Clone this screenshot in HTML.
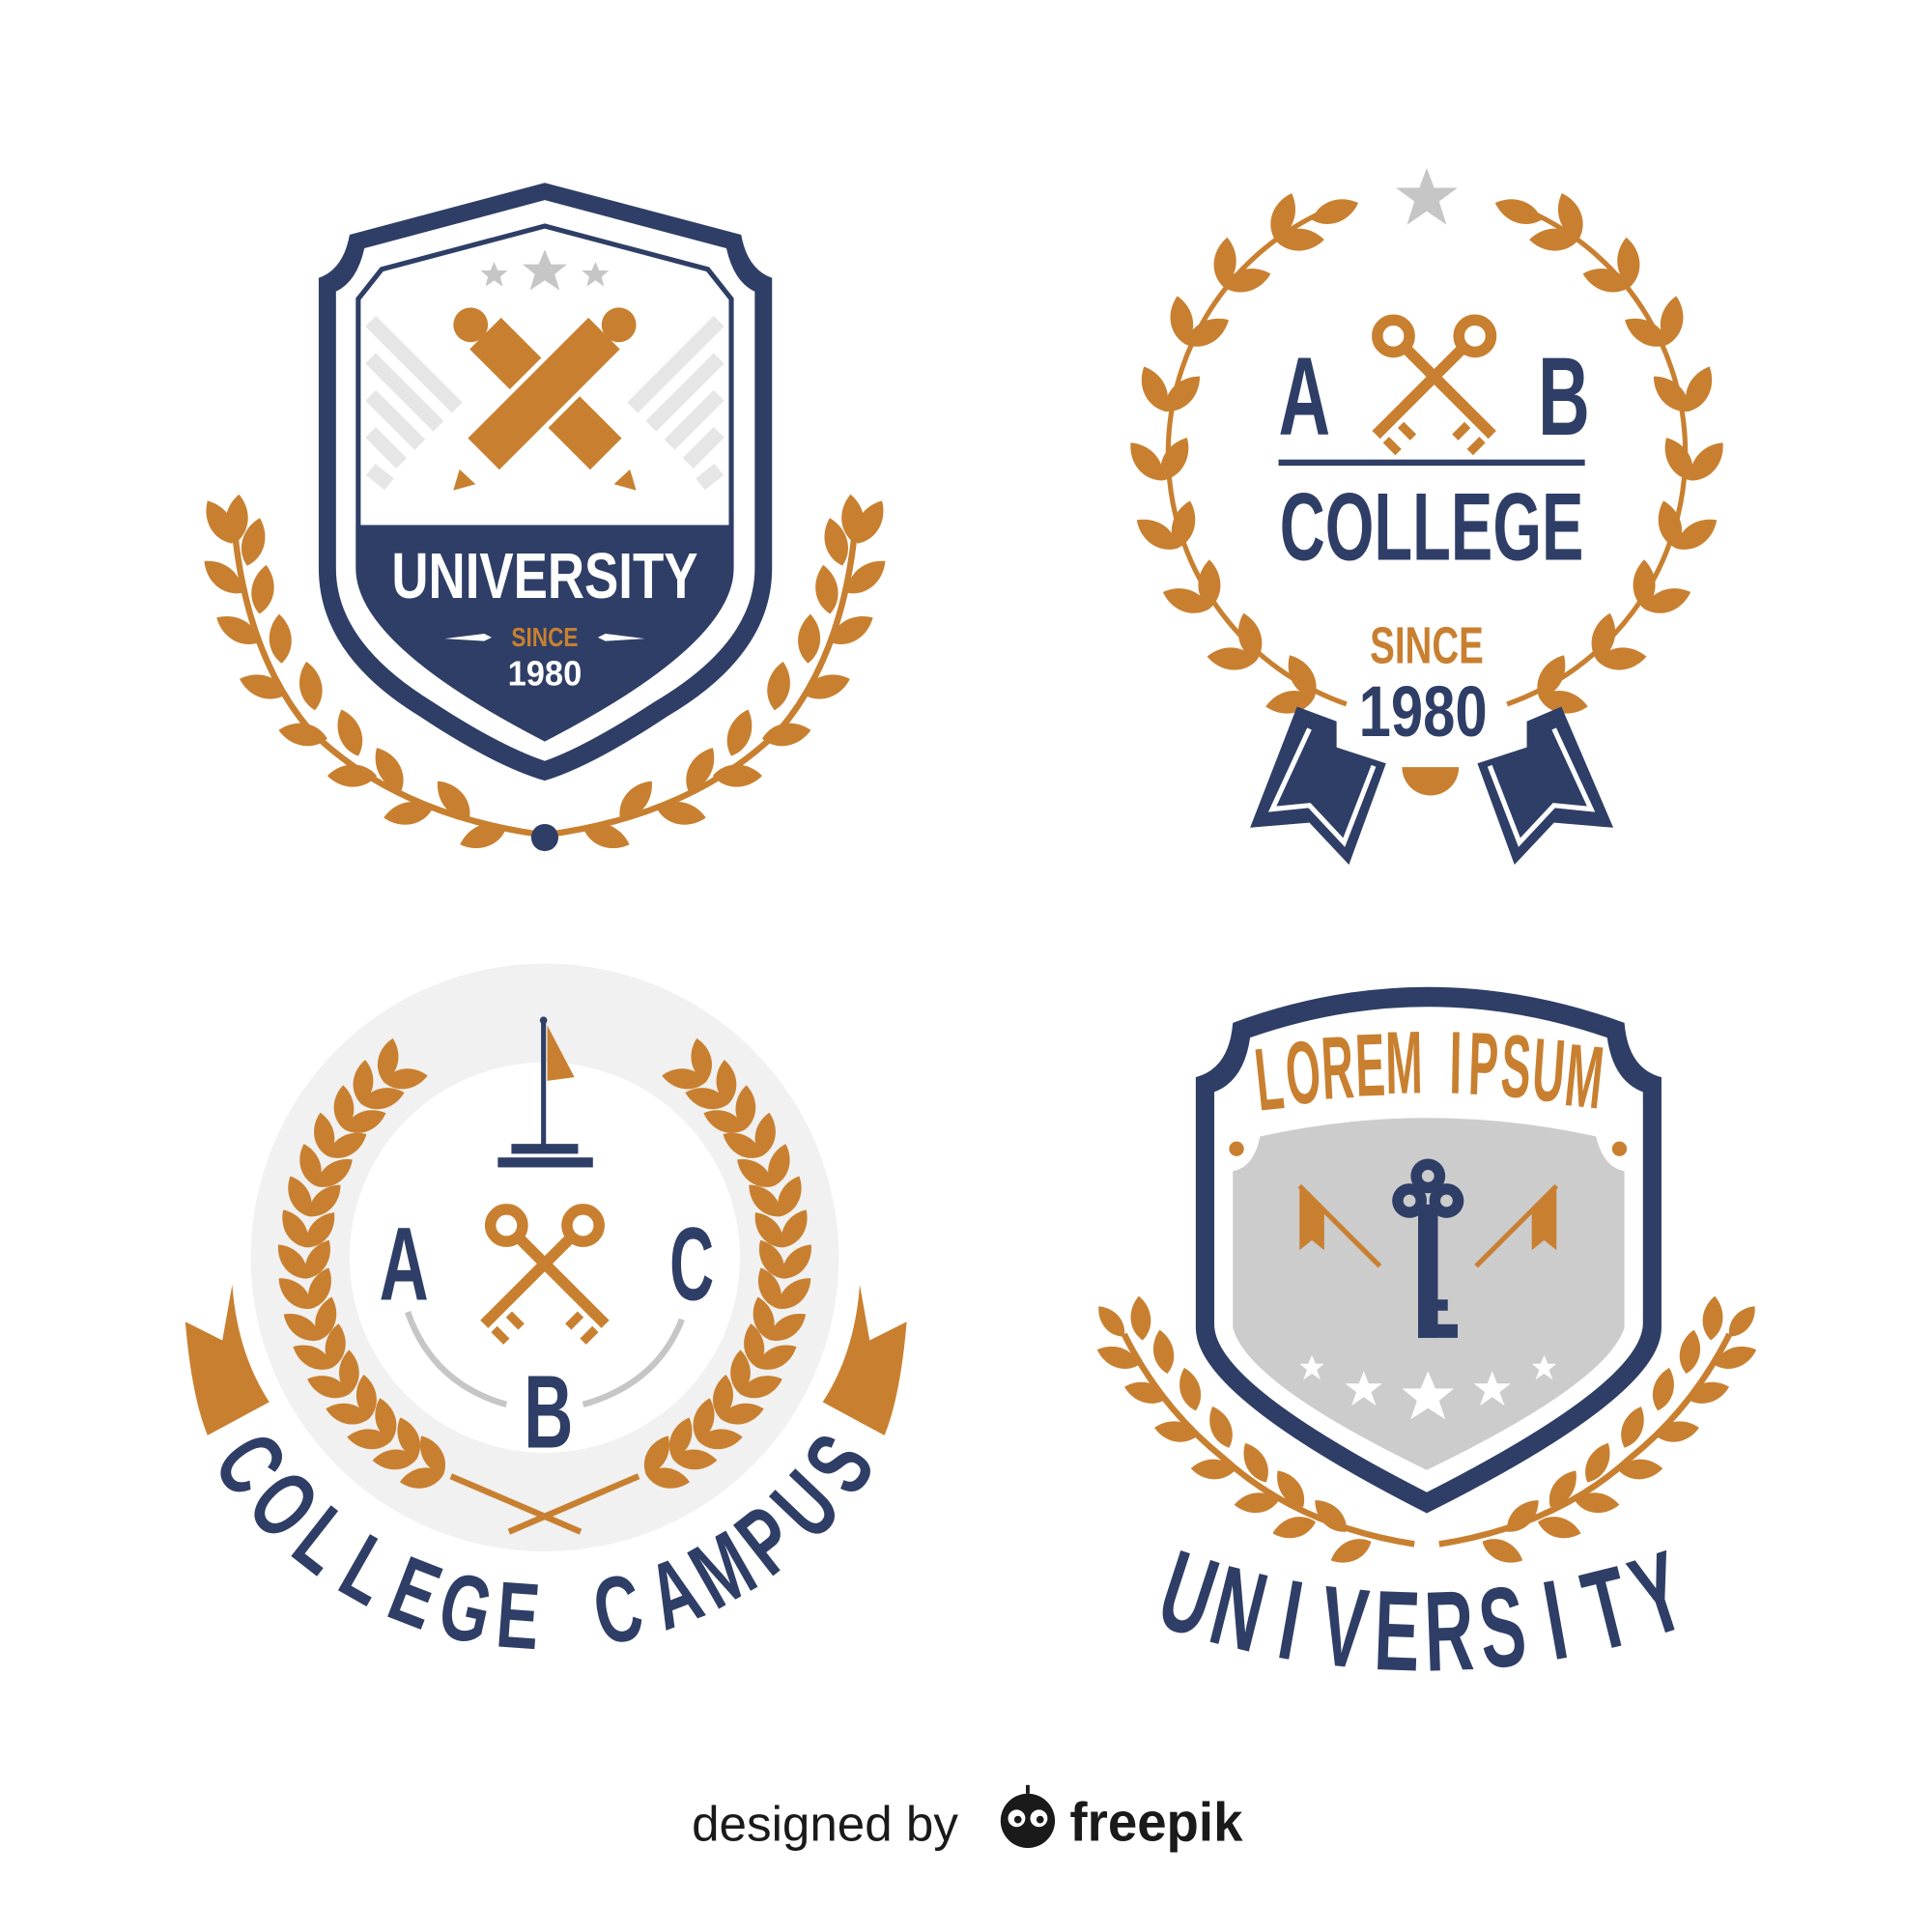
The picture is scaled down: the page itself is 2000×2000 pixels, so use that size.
<!DOCTYPE html>
<html><head><meta charset="utf-8"><style>
html,body{margin:0;padding:0;background:#fff}
svg{display:block}
.c{font-family:"Liberation Sans",sans-serif;font-weight:bold}
.L{font-family:"Liberation Sans",sans-serif;font-weight:bold;text-anchor:middle}
</style></head><body>
<svg width="2000" height="2000" viewBox="0 0 1564 1564" xmlns="http://www.w3.org/2000/svg">
<defs>
<path id="lf" d="M0,0 C12,-10 12,-28 0,-40 C-12,-28 -12,-10 0,0Z" fill="#c88030"/>
<clipPath id="bot1"><rect x="250" y="425" width="400" height="300"/></clipPath>
<clipPath id="in1"><path d="M441,183 L573,218 L592,242 L592,460 Q592,520 441,598 Q290,520 290,460 L290,242 L309,218 Z"/></clipPath>
<g id="key">
<circle cx="0" cy="0" r="13" fill="none" stroke="#c88030" stroke-width="9"/>
<line x1="9" y1="9" x2="80" y2="80" stroke="#c88030" stroke-width="9"/>
<line x1="60" y1="72" x2="50" y2="82" stroke="#c88030" stroke-width="7"/>
<line x1="72" y1="84" x2="62" y2="94" stroke="#c88030" stroke-width="7"/>
</g>
</defs>

<!-- ============ BADGE 1 ============ -->
<g id="br1">
<path d="M441,676 Q320,660 250,590 Q200,530 190,430" fill="none" stroke="#c88030" stroke-width="5"/>
<use href="#lf" transform="translate(410,670) rotate(-110)"/>
<use href="#lf" transform="translate(380,663) rotate(-40)"/>
<use href="#lf" transform="translate(350,655) rotate(-100)"/>
<use href="#lf" transform="translate(325,640) rotate(-30)"/>
<use href="#lf" transform="translate(305,628) rotate(-90)"/>
<use href="#lf" transform="translate(290,612) rotate(-20)"/>
<use href="#lf" transform="translate(265,598) rotate(-80)"/>
<use href="#lf" transform="translate(255,575) rotate(-10)"/>
<use href="#lf" transform="translate(232,562) rotate(-72)"/>
<use href="#lf" transform="translate(228,537) rotate(-3)"/>
<use href="#lf" transform="translate(210,520) rotate(-60)"/>
<use href="#lf" transform="translate(210,497) rotate(8)"/>
<use href="#lf" transform="translate(196,480) rotate(-50)"/>
<use href="#lf" transform="translate(200,458) rotate(15)"/>
<use href="#lf" transform="translate(188,440) rotate(-30)"/>
<use href="#lf" transform="translate(190,440) rotate(5)"/>
</g>
<use href="#br1" transform="translate(882,0) scale(-1,1)"/>
<circle cx="441" cy="678" r="11" fill="#2f3e66"/>

<path d="M441,148 L600,190 Q605,218 625,225 L625,460 Q625,530 540,580 Q480,620 441,632 Q400,620 340,580 Q258,530 258,460 L258,225 Q278,218 283,190 Z" fill="#2f3e66"/>
<path d="M441,162 L588,201 Q594,228 611,236 L611,460 Q611,520 530,568 Q475,604 441,616 Q405,604 350,568 Q272,520 272,460 L272,236 Q289,228 295,201 Z" fill="#fff"/>
<path d="M441,183 L573,218 L592,242 L592,460 Q592,520 441,598 Q290,520 290,460 L290,242 L309,218 Z" fill="none" stroke="#2f3e66" stroke-width="4"/>
<g clip-path="url(#in1)">
<g stroke="#e6e6e6" stroke-width="12">
<line x1="300" y1="260" x2="370" y2="330"/><line x1="300" y1="290" x2="355" y2="345"/><line x1="300" y1="320" x2="340" y2="360"/><line x1="300" y1="350" x2="325" y2="375"/><line x1="300" y1="380" x2="315" y2="392"/>
<line x1="582" y1="260" x2="512" y2="330"/><line x1="582" y1="290" x2="527" y2="345"/><line x1="582" y1="320" x2="542" y2="360"/><line x1="582" y1="350" x2="557" y2="375"/><line x1="582" y1="380" x2="567" y2="392"/>
</g>
<path d="M441,183 L573,218 L592,242 L592,460 Q592,520 441,598 Q290,520 290,460 L290,242 L309,218 Z" fill="#2f3e66" clip-path="url(#bot1)"/>
</g>
<rect x="423" y="250" width="36" height="138" fill="#c88030" transform="rotate(-45 441 318)"/>
<rect x="423" y="250" width="36" height="138" fill="#c88030" stroke="#fff" stroke-width="8" paint-order="stroke" transform="rotate(45 441 318)"/>
<circle cx="381" cy="263" r="14" fill="#c88030"/><circle cx="501" cy="263" r="14" fill="#c88030"/>
<polygon points="367,397 372,380 385,392" fill="#c88030"/><polygon points="515,397 510,380 497,392" fill="#c88030"/>
<g fill="#c6c6c6">
<polygon points="441,202 446,214 459,214 449,222 453,235 441,227 429,235 433,222 423,214 436,214"/>
<polygon points="400,212 403,219 411,219 405,224 407,232 400,227 393,232 395,224 389,219 397,219"/>
<polygon points="482,212 485,219 493,219 487,224 489,232 482,227 475,232 477,224 471,219 479,219"/>
</g>
<text x="441" y="484" class="c" font-size="52" fill="#fff" text-anchor="middle" textLength="248" lengthAdjust="spacingAndGlyphs">UNIVERSITY</text>
<text x="441" y="523" class="c" font-size="22" fill="#c88030" text-anchor="middle" textLength="54" lengthAdjust="spacingAndGlyphs">SINCE</text>
<text x="441" y="555" class="c" font-size="28" fill="#fff" text-anchor="middle" textLength="60" lengthAdjust="spacingAndGlyphs">1980</text>
<polygon points="360,517 392,513 398,516 392,519" fill="#fff"/><polygon points="522,517 490,513 484,516 490,519" fill="#fff"/>

<!-- ============ BADGE 2 ============ -->
<g id="br2">
<path d="M1090,570 A215,215 0 0 1 1070,172" fill="none" stroke="#c88030" stroke-width="4"/>
<use href="#lf" transform="translate(1064,565) rotate(-100)"/><use href="#lf" transform="translate(1064,565) rotate(-30)"/>
<use href="#lf" transform="translate(1017,535) rotate(-85)"/><use href="#lf" transform="translate(1017,535) rotate(-15)"/>
<use href="#lf" transform="translate(979,493) rotate(-70)"/><use href="#lf" transform="translate(979,493) rotate(0)"/>
<use href="#lf" transform="translate(953,444) rotate(-55)"/><use href="#lf" transform="translate(953,444) rotate(15)"/>
<use href="#lf" transform="translate(941,389) rotate(-40)"/><use href="#lf" transform="translate(941,389) rotate(30)"/>
<use href="#lf" transform="translate(943,333) rotate(-25)"/><use href="#lf" transform="translate(943,333) rotate(45)"/>
<use href="#lf" transform="translate(960,279) rotate(-10)"/><use href="#lf" transform="translate(960,279) rotate(60)"/>
<use href="#lf" transform="translate(990,232) rotate(5)"/><use href="#lf" transform="translate(990,232) rotate(75)"/>
<use href="#lf" transform="translate(1032,194) rotate(20)"/><use href="#lf" transform="translate(1032,194) rotate(90)"/>
<use href="#lf" transform="translate(1062,178) rotate(70)"/>
</g>
<use href="#br2" transform="translate(2310,0) scale(-1,1)"/>
<polygon points="1155,136 1161,152 1180,152 1165,163 1171,182 1155,171 1139,182 1145,163 1130,152 1149,152" fill="#c6c6c6"/>
<rect x="1100" y="520" width="110" height="95" fill="#fff"/>
<text x="1056" y="352" class="c" font-size="90" fill="#2f3e66" text-anchor="middle" textLength="42" lengthAdjust="spacingAndGlyphs">A</text>
<text x="1266" y="352" class="c" font-size="90" fill="#2f3e66" text-anchor="middle" textLength="42" lengthAdjust="spacingAndGlyphs">B</text>
<use href="#key" transform="translate(1128,272)"/>
<use href="#key" transform="translate(1194,272) scale(-1,1)"/>
<rect x="1035" y="372" width="248" height="5" fill="#2f3e66"/>
<text x="1159" y="453" class="c" font-size="78" fill="#2f3e66" text-anchor="middle" textLength="246" lengthAdjust="spacingAndGlyphs">COLLEGE</text>
<text x="1155" y="537" class="c" font-size="42" fill="#c88030" text-anchor="middle" textLength="92" lengthAdjust="spacingAndGlyphs">SINCE</text>
<text x="1152" y="596" class="c" font-size="58" fill="#2f3e66" text-anchor="middle" textLength="104" lengthAdjust="spacingAndGlyphs">1980</text>
<path d="M1135,621 L1181,621 A23,23 0 0 1 1135,621Z" fill="#c88030"/>
<polygon points="1050,572 1082,584 1082,605 1122,618 1092,700 1060,666 1012,670" fill="#2f3e66"/>
<polyline points="1060,590 1030,655 1060,652 1088,682 1112,620" fill="none" stroke="#fff" stroke-width="4"/>
<polygon points="1264,572 1236,584 1236,605 1196,618 1226,700 1258,666 1306,670" fill="#2f3e66"/>
<polyline points="1258,590 1288,655 1258,652 1230,682 1206,620" fill="none" stroke="#fff" stroke-width="4"/>

<!-- ============ BADGE 3 ============ -->
<circle cx="441" cy="1018" r="238" fill="#f1f1f1"/>
<circle cx="441" cy="1018" r="158" fill="#fff"/>
<path d="M150,1070 Q155,1130 168,1162 L218,1135 Q192,1095 188,1040 L180,1085 Z" fill="#c88030"/>
<path d="M734,1070 Q729,1130 716,1162 L666,1135 Q692,1095 696,1040 L704,1085 Z" fill="#c88030"/>
<g id="br3">
<g transform="translate(441,1018) scale(0.9) translate(-441,-1018)">
<g transform="translate(-714,648)">
<use href="#lf" transform="translate(1064,565) rotate(-100)"/><use href="#lf" transform="translate(1064,565) rotate(-30)"/>
<use href="#lf" transform="translate(1040,551) rotate(-92)"/><use href="#lf" transform="translate(1040,551) rotate(-22)"/>
<use href="#lf" transform="translate(1017,535) rotate(-85)"/><use href="#lf" transform="translate(1017,535) rotate(-15)"/>
<use href="#lf" transform="translate(997,515) rotate(-77)"/><use href="#lf" transform="translate(997,515) rotate(-7)"/>
<use href="#lf" transform="translate(979,493) rotate(-70)"/><use href="#lf" transform="translate(979,493) rotate(0)"/>
<use href="#lf" transform="translate(964,469) rotate(-62)"/><use href="#lf" transform="translate(964,469) rotate(8)"/>
<use href="#lf" transform="translate(953,444) rotate(-55)"/><use href="#lf" transform="translate(953,444) rotate(15)"/>
<use href="#lf" transform="translate(945,416) rotate(-47)"/><use href="#lf" transform="translate(945,416) rotate(23)"/>
<use href="#lf" transform="translate(941,389) rotate(-40)"/><use href="#lf" transform="translate(941,389) rotate(30)"/>
<use href="#lf" transform="translate(941,361) rotate(-32)"/><use href="#lf" transform="translate(941,361) rotate(38)"/>
<use href="#lf" transform="translate(943,333) rotate(-25)"/><use href="#lf" transform="translate(943,333) rotate(45)"/>
<use href="#lf" transform="translate(950,306) rotate(-17)"/><use href="#lf" transform="translate(950,306) rotate(53)"/>
<use href="#lf" transform="translate(960,279) rotate(-10)"/><use href="#lf" transform="translate(960,279) rotate(60)"/>
<use href="#lf" transform="translate(975,255) rotate(-2)"/><use href="#lf" transform="translate(975,255) rotate(68)"/>
<use href="#lf" transform="translate(990,232) rotate(5)"/><use href="#lf" transform="translate(990,232) rotate(75)"/>
<use href="#lf" transform="translate(1010,212) rotate(12)"/><use href="#lf" transform="translate(1010,212) rotate(82)"/>
</g>
</g>
</g>
<use href="#br3" transform="translate(882,0) scale(-1,1)"/>
<path d="M365,1195 L470,1240 M517,1195 L412,1240" stroke="#c88030" stroke-width="5" fill="none"/>
<line x1="440" y1="826" x2="440" y2="930" stroke="#2f3e66" stroke-width="4"/>
<circle cx="440" cy="826" r="3" fill="#2f3e66"/>
<polygon points="443,830 465,872 443,875" fill="#c88030"/>
<rect x="414" y="926" width="54" height="8" fill="#2f3e66"/><rect x="403" y="937" width="77" height="8" fill="#2f3e66"/>
<text x="327" y="1052" class="c" font-size="84" fill="#2f3e66" text-anchor="middle" textLength="40" lengthAdjust="spacingAndGlyphs">A</text>
<text x="560" y="1052" class="c" font-size="84" fill="#2f3e66" text-anchor="middle" textLength="36" lengthAdjust="spacingAndGlyphs">C</text>
<text x="444" y="1172" class="c" font-size="84" fill="#2f3e66" text-anchor="middle" textLength="40" lengthAdjust="spacingAndGlyphs">B</text>
<use href="#key" transform="translate(410,992)"/>
<use href="#key" transform="translate(472,992) scale(-1,1)"/>
<path d="M330,1062 Q350,1120 410,1137" stroke="#c6c6c6" stroke-width="5" fill="none"/>
<path d="M552,1068 Q532,1120 472,1137" stroke="#c6c6c6" stroke-width="5" fill="none"/>
<g class="L" font-size="76" fill="#2f3e66">
<text transform="translate(203.5,1184.4) rotate(55) scale(.68,1)" y="27">C</text>
<text transform="translate(230.5,1217.5) rotate(46.5) scale(.68,1)" y="27">O</text>
<text transform="translate(262,1246) rotate(38.1) scale(.68,1)" y="27">L</text>
<text transform="translate(297.7,1270) rotate(29.6) scale(.68,1)" y="27">L</text>
<text transform="translate(336.3,1288.5) rotate(21.2) scale(.68,1)" y="27">E</text>
<text transform="translate(377.2,1301) rotate(12.7) scale(.68,1)" y="27">G</text>
<text transform="translate(419.5,1307) rotate(4.2) scale(.68,1)" y="27">E</text>
<text transform="translate(500,1302) rotate(-11.5) scale(.68,1)" y="27">C</text>
<text transform="translate(545.7,1288.5) rotate(-21.1) scale(.68,1)" y="27">A</text>
<text transform="translate(584.3,1270) rotate(-29.6) scale(.68,1)" y="27">M</text>
<text transform="translate(620,1246) rotate(-38.1) scale(.68,1)" y="27">P</text>
<text transform="translate(651.5,1217.5) rotate(-46.5) scale(.68,1)" y="27">U</text>
<text transform="translate(678.5,1184.4) rotate(-55) scale(.68,1)" y="27">S</text>
</g>

<!-- ============ BADGE 4 ============ -->
<g id="br4">
<path d="M1145,1250 Q1050,1235 990,1180 Q940,1140 910,1080" fill="none" stroke="#c88030" stroke-width="5"/>
<use href="#lf" transform="translate(1110,1248) rotate(-115) scale(.9)"/><use href="#lf" transform="translate(1090,1240) rotate(-45) scale(.9)"/>
<use href="#lf" transform="translate(1065,1232) rotate(-105) scale(.9)"/><use href="#lf" transform="translate(1055,1220) rotate(-35) scale(.9)"/>
<use href="#lf" transform="translate(1035,1215) rotate(-95) scale(.9)"/><use href="#lf" transform="translate(1025,1200) rotate(-28) scale(.9)"/>
<use href="#lf" transform="translate(1000,1190) rotate(-88) scale(.9)"/><use href="#lf" transform="translate(995,1172) rotate(-22) scale(.9)"/>
<use href="#lf" transform="translate(970,1162) rotate(-80) scale(.9)"/><use href="#lf" transform="translate(968,1142) rotate(-15) scale(.9)"/>
<use href="#lf" transform="translate(945,1132) rotate(-75) scale(.9)"/><use href="#lf" transform="translate(945,1112) rotate(-10) scale(.9)"/>
<use href="#lf" transform="translate(922,1105) rotate(-70) scale(.9)"/><use href="#lf" transform="translate(925,1085) rotate(-5) scale(.9)"/>
<use href="#lf" transform="translate(910,1082) rotate(-40) scale(.8)"/>
</g>
<use href="#br4" transform="translate(2310,0) scale(-1,1)"/>
<path d="M998,828 Q1155,770 1315,828 Q1318,865 1345,872 L1345,1075 Q1345,1130 1155,1225 Q968,1130 968,1075 L968,872 Q995,865 998,828 Z" fill="#2f3e66"/>
<path d="M1012,840 Q1155,790 1301,840 Q1306,875 1330,884 L1330,1072 Q1328,1120 1155,1208 Q983,1120 983,1072 L983,884 Q1007,875 1012,840 Z" fill="#fff"/>
<path d="M1020,920 Q1155,890 1292,920 Q1298,945 1315,948 L1315,1075 Q1300,1120 1155,1190 Q1010,1120 998,1075 L998,948 Q1015,945 1020,920Z" fill="#cccccc"/>
<circle cx="1001" cy="930" r="6" fill="#c88030"/><circle cx="1311" cy="930" r="6" fill="#c88030"/>
<g class="L" font-size="72" fill="#c88030">
<text transform="translate(1030,898) rotate(-6) scale(.5,1)">L</text>
<text transform="translate(1057,893) rotate(-5) scale(.5,1)">O</text>
<text transform="translate(1084,889) rotate(-3) scale(.5,1)">R</text>
<text transform="translate(1110,887) rotate(-2) scale(.5,1)">E</text>
<text transform="translate(1137,885) rotate(-1) scale(.5,1)">M</text>
<text transform="translate(1178,885) rotate(1) scale(.5,1)">I</text>
<text transform="translate(1200,886) rotate(2) scale(.5,1)">P</text>
<text transform="translate(1226,888) rotate(3) scale(.5,1)">S</text>
<text transform="translate(1252,891) rotate(4) scale(.5,1)">U</text>
<text transform="translate(1280,896) rotate(6) scale(.5,1)">M</text>
</g>
<g fill="#2f3e66">
<circle cx="1156" cy="952" r="14"/><circle cx="1141" cy="972" r="14"/><circle cx="1171" cy="972" r="14"/>
<rect x="1148" y="975" width="16" height="108"/><rect x="1148" y="1072" width="32" height="11"/><rect x="1148" y="1052" width="24" height="9"/>
</g>
<circle cx="1156" cy="952" r="5" fill="#ccc"/><circle cx="1141" cy="972" r="5" fill="#ccc"/><circle cx="1171" cy="972" r="5" fill="#ccc"/>
<line x1="1052" y1="960" x2="1117" y2="1025" stroke="#c88030" stroke-width="4"/>
<line x1="1260" y1="960" x2="1195" y2="1025" stroke="#c88030" stroke-width="4"/>
<polygon points="1052,962 1072,982 1072,1012 1062,1004 1052,1012" fill="#c88030"/>
<polygon points="1260,962 1240,982 1240,1012 1250,1004 1260,1012" fill="#c88030"/>
<g fill="#fff">
<polygon points="1156,1110 1162,1124 1177,1124 1165,1134 1170,1149 1156,1140 1142,1149 1147,1134 1135,1124 1150,1124"/>
<polygon points="1104,1110 1108,1120 1119,1120 1110,1127 1114,1138 1104,1131 1094,1138 1098,1127 1089,1120 1100,1120"/>
<polygon points="1208,1110 1212,1120 1223,1120 1214,1127 1218,1138 1208,1131 1198,1138 1202,1127 1193,1120 1204,1120"/>
<polygon points="1062,1097 1065,1104 1072,1104 1066,1109 1069,1117 1062,1112 1055,1117 1058,1109 1052,1104 1059,1104"/>
<polygon points="1250,1097 1253,1104 1260,1104 1254,1109 1257,1117 1250,1112 1243,1117 1246,1109 1240,1104 1247,1104"/>
</g>
<g class="L" font-size="92" fill="#2f3e66">
<text transform="translate(962,1290) rotate(18) scale(.6,1)" y="32">U</text>
<text transform="translate(1003,1302) rotate(14) scale(.6,1)" y="32">N</text>
<text transform="translate(1045,1311) rotate(10) scale(.6,1)" y="32">I</text>
<text transform="translate(1088,1317) rotate(6) scale(.6,1)" y="32">V</text>
<text transform="translate(1131,1320) rotate(2) scale(.6,1)" y="32">E</text>
<text transform="translate(1173,1320) rotate(-2) scale(.6,1)" y="32">R</text>
<text transform="translate(1216,1317) rotate(-6) scale(.6,1)" y="32">S</text>
<text transform="translate(1259,1311) rotate(-10) scale(.6,1)" y="32">I</text>
<text transform="translate(1301,1302) rotate(-14) scale(.6,1)" y="32">T</text>
<text transform="translate(1342,1290) rotate(-18) scale(.6,1)" y="32">Y</text>
</g>

<!-- credit -->
<text x="560" y="1490" font-family="Liberation Sans, sans-serif" font-size="40" fill="#1a1a1a">designed by</text>
<circle cx="832" cy="1474" r="22" fill="#1a1a1a"/>
<circle cx="823" cy="1472" r="7" fill="#fff"/><circle cx="841" cy="1472" r="7" fill="#fff"/>
<circle cx="824" cy="1473" r="3" fill="#1a1a1a"/><circle cx="842" cy="1473" r="3" fill="#1a1a1a"/>
<line x1="832" y1="1452" x2="832" y2="1445" stroke="#1a1a1a" stroke-width="3"/>
<text x="866" y="1490" font-family="Liberation Sans, sans-serif" font-weight="bold" font-size="44" fill="#1a1a1a" textLength="140" lengthAdjust="spacingAndGlyphs">freepik</text>
</svg>
</body></html>
